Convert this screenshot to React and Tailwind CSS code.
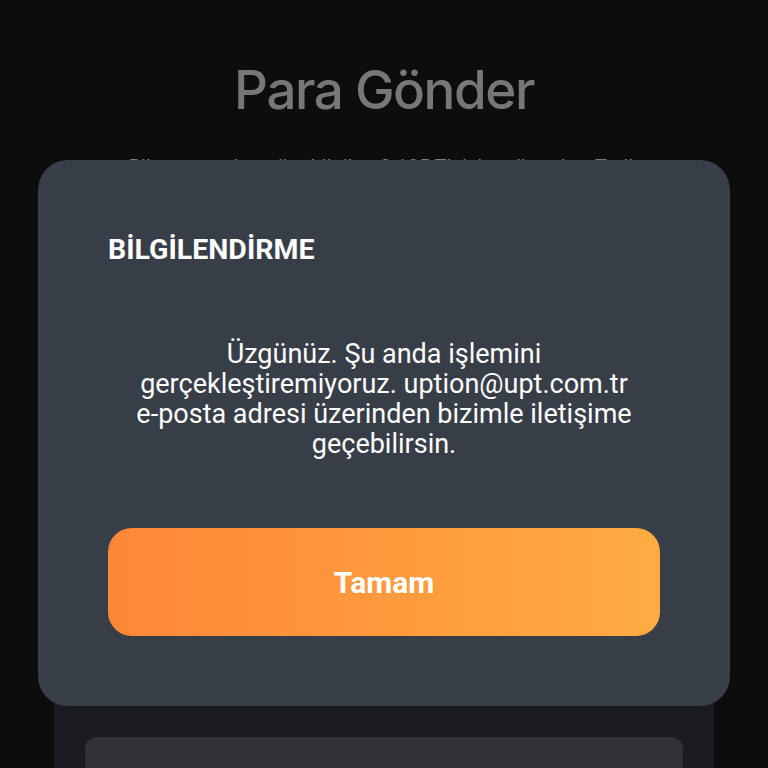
import React from "react";

function ArkaSayfa() {
  return (
    <div className="flex flex-col items-center">
      <h1 className="mt-[60px] text-[53px] leading-[60px] font-medium tracking-[-1.5px] text-[#777777]" style={{ fontFamily: "Inter, sans-serif" }}>
        Para Gönder
      </h1>
      <p className="mt-[33px] w-[580px] text-center text-[20px] leading-[28px] text-[#7c7c7c]" style={{ fontFamily: "Roboto, sans-serif" }}>
        Bilmen gereken tüm bilgiler: 0.125 TL işlem ücreti ve Tarih
      </p>
      <div className="mt-[439px] w-[660px] h-[200px] rounded-[20px] bg-[#1a1c22] px-[31px] pt-[117px]">
        <div className="h-full rounded-[12px] bg-[#313236]" />
      </div>
    </div>
  );
}

function BilgiModal() {
  return (
    <div
      className="absolute left-[38px] top-[160px] w-[692px] rounded-[30px] bg-[#383e48] px-[70px] pt-[75px] pb-[70px] flex flex-col"
      style={{ fontFamily: "Roboto, sans-serif" }}
    >
      <h2 className="text-[28.5px] leading-[30px] font-bold text-white">BİLGİLENDİRME</h2>
      <p className="mt-[74px] text-center text-[27px] leading-[30px] text-white px-[10px]">
        Üzgünüz. Şu anda işlemini gerçekleştiremiyoruz. uption@upt.com.tr{" "}
        <span className="whitespace-nowrap">e-posta</span> adresi üzerinden bizimle iletişime geçebilirsin.
      </p>
      <button className="mt-[69px] h-[108px] w-full rounded-[24px] bg-gradient-to-r from-[#ff8737] to-[#ffab42] text-[30px] font-bold text-white">
        Tamam
      </button>
    </div>
  );
}

export default function App() {
  return (
    <div className="relative h-[768px] overflow-hidden bg-[#0d0d0e]">
      <ArkaSayfa />
      <BilgiModal />
    </div>
  );
}
